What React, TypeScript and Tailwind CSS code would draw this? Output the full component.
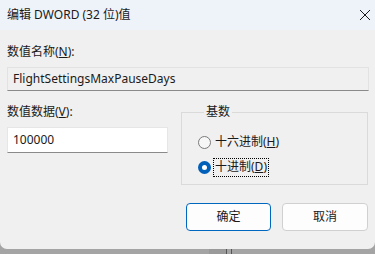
import React from "react";

const font = { fontFamily: '"Segoe UI", "Noto Sans", "Noto Sans CJK SC", sans-serif' };

export default function App() {
  return (
    <div className="relative w-[375px] h-[254px] bg-[#a4a4a4] overflow-hidden text-[12px] text-[#1a1a1a]" style={font}>
      {/* background strip beneath window */}
      <div className="absolute left-[209px] top-[249px] w-[17px] h-[5px] bg-[#9a9a9a]" />
      <div className="absolute left-[226px] top-[249px] w-px h-[5px] bg-[#555]" />
      <div className="absolute left-[231px] top-[249px] w-px h-[5px] bg-[#555]" />
      <div className="relative w-[375px] h-[249px] bg-[#f0f0f0] rounded-b-[7px] flex flex-col">
        {/* title bar */}
        <div className="h-[30px] bg-[#eef3f9] flex items-center justify-between pl-[7px] pr-[4px]">
          <span className="leading-none">编辑 DWORD (32 位)值</span>
          <svg width="12" height="12" viewBox="0 0 12 12" className="mt-[-1px]">
            <path d="M1 1 L11 11 M11 1 L1 11" stroke="#1a1a1a" strokeWidth="1" />
          </svg>
        </div>
        <div className="flex flex-col px-[7px] pt-[14px]">
          <div className="leading-[16px]">
            数值名称(<span className="underline">N</span>):
          </div>
          <div className="mt-[7px] h-[24px] w-[362px] border border-[#e2e2e2] border-b-[#8a8a8a] bg-[#f0f0f0] flex items-center pl-[5px]">
            FlightSettingsMaxPauseDays
          </div>
          <div className="flex mt-[13px]">
            <div className="flex flex-col w-[161px]">
              <div className="leading-[16px]">
                数值数据(<span className="underline">V</span>):
              </div>
              <div className="mt-[7px] h-[26px] w-[161px] border border-[#e6e6e6] border-b-[#8a8a8a] bg-white flex items-center pl-[5px]">
                100000
              </div>
            </div>
            <fieldset className="ml-[13px] w-[188px] h-[81px] border border-[#dadada] pl-[16px] pt-0 m-0">
              <legend className="ml-[6px] px-[2px] leading-[16px]">基数</legend>
              <div className="flex items-center mt-[13px] h-[18px]">
                <span className="w-[13px] h-[13px] rounded-full border border-[#7a7a7a] bg-[#f7f7f7]" />
                <span className="ml-[3px] px-[1px]">
                  十六进制(<span className="underline">H</span>)
                </span>
              </div>
              <div className="flex items-center mt-[6px] h-[20px]">
                <span className="w-[13px] h-[13px] rounded-full bg-[#005fb8] flex items-center justify-center">
                  <span className="w-[5px] h-[5px] rounded-full bg-white" />
                </span>
                <span className="ml-[2px] h-[19px] px-[1px] border border-dotted border-black flex items-center">
                  十进制(<span className="underline">D</span>)
                </span>
              </div>
            </fieldset>
          </div>
          <div className="flex justify-end gap-[11px] mt-[18px]">
            <button className="w-[85px] h-[28px] rounded-[4px] border border-[#0067c0] bg-[#fdfdfd] flex items-center justify-center">
              确定
            </button>
            <button className="w-[86px] h-[28px] rounded-[4px] border border-[#d0d0d0] bg-[#fdfdfd] flex items-center justify-center">
              取消
            </button>
          </div>
        </div>
      </div>
    </div>
  );
}
